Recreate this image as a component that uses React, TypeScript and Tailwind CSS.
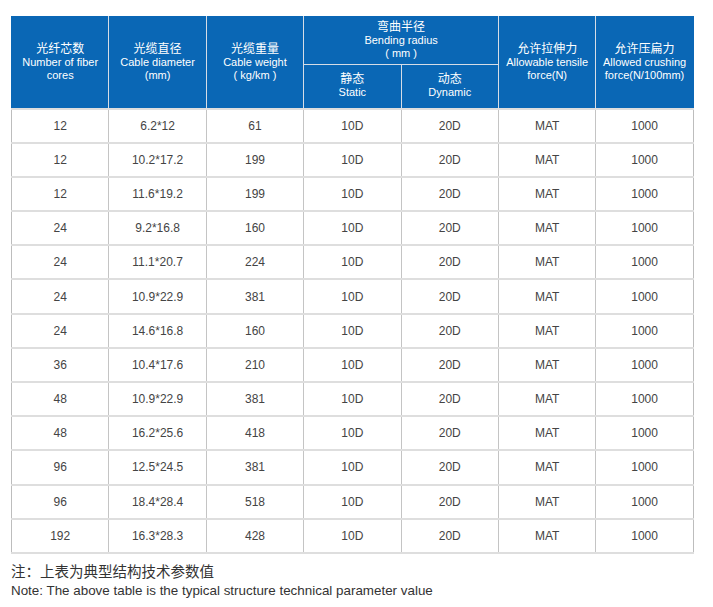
const rows: [string, string, string][] = [
  ["12", "6.2*12", "61"],
  ["12", "10.2*17.2", "199"],
  ["12", "11.6*19.2", "199"],
  ["24", "9.2*16.8", "160"],
  ["24", "11.1*20.7", "224"],
  ["24", "10.9*22.9", "381"],
  ["24", "14.6*16.8", "160"],
  ["36", "10.4*17.6", "210"],
  ["48", "10.9*22.9", "381"],
  ["48", "16.2*25.6", "418"],
  ["96", "12.5*24.5", "381"],
  ["96", "18.4*28.4", "518"],
  ["192", "16.3*28.3", "428"],
];

const th = "border border-[#d6dde6] px-0 text-center align-middle font-normal text-white";
const td = "border-y-2 border-x border-y-[#dedede] border-x-[#c4c4c4] text-center align-middle";
const zh = "text-[12px] leading-[13px]";

export default function App() {
  return (
    <div
      className="min-h-screen bg-white pl-[11px] pt-[16px] text-[#444]"
      style={{ fontFamily: '"Liberation Sans", "Noto Sans CJK SC", Arial, sans-serif' }}
    >
      <table className="w-[682px] table-fixed border-collapse">
        <colgroup>
          {Array.from({ length: 7 }).map((_, i) => (
            <col key={i} className="w-[97.4px]" />
          ))}
        </colgroup>
        <thead className="bg-[#0a67b5] text-[11px] leading-[13px]">
          <tr className="h-[48px]">
            <th rowSpan={2} className={`${th} border-t-[#0a67b5] border-l-[#0a67b5]`}>
              <div className={zh}>光纤芯数</div>
              <div>Number of fiber</div>
              <div>cores</div>
            </th>
            <th rowSpan={2} className={`${th} border-t-[#0a67b5]`}>
              <div className={zh}>光缆直径</div>
              <div>Cable diameter</div>
              <div>(mm)</div>
            </th>
            <th rowSpan={2} className={`${th} border-t-[#0a67b5]`}>
              <div className={zh}>光缆重量</div>
              <div>Cable weight</div>
              <div>( kg/km )</div>
            </th>
            <th colSpan={2} className={`${th} border-t-[#0a67b5]`}>
              <div className={zh}>弯曲半径</div>
              <div>Bending radius</div>
              <div>( mm )</div>
            </th>
            <th rowSpan={2} className={`${th} border-t-[#0a67b5]`}>
              <div className={zh}>允许拉伸力</div>
              <div>Allowable tensile</div>
              <div>force(N)</div>
            </th>
            <th rowSpan={2} className={`${th} border-t-[#0a67b5] border-r-[#0a67b5]`}>
              <div className={zh}>允许压扁力</div>
              <div>Allowed crushing</div>
              <div>force(N/100mm)</div>
            </th>
          </tr>
          <tr className="h-[44px]">
            <th className={th}>
              <div className={zh}>静态</div>
              <div>Static</div>
            </th>
            <th className={th}>
              <div className={zh}>动态</div>
              <div>Dynamic</div>
            </th>
          </tr>
        </thead>
        <tbody className="text-[12px]">
          {rows.map((r, i) => (
            <tr key={i} className="h-[34.2px]">
              <td className={`${td} border-l-[#bdbdbd]`}>{r[0]}</td>
              <td className={td}>{r[1]}</td>
              <td className={td}>{r[2]}</td>
              <td className={td}>10D</td>
              <td className={td}>20D</td>
              <td className={td}>MAT</td>
              <td className={`${td} border-r-[#bdbdbd]`}>1000</td>
            </tr>
          ))}
        </tbody>
      </table>
      <p className="mt-[8px] text-[14.5px] leading-[20px] text-[#333]">注：上表为典型结构技术参数值</p>
      <p className="text-[13.4px] leading-[18px] text-[#333]">
        Note: The above table is the typical structure technical parameter value
      </p>
    </div>
  );
}
